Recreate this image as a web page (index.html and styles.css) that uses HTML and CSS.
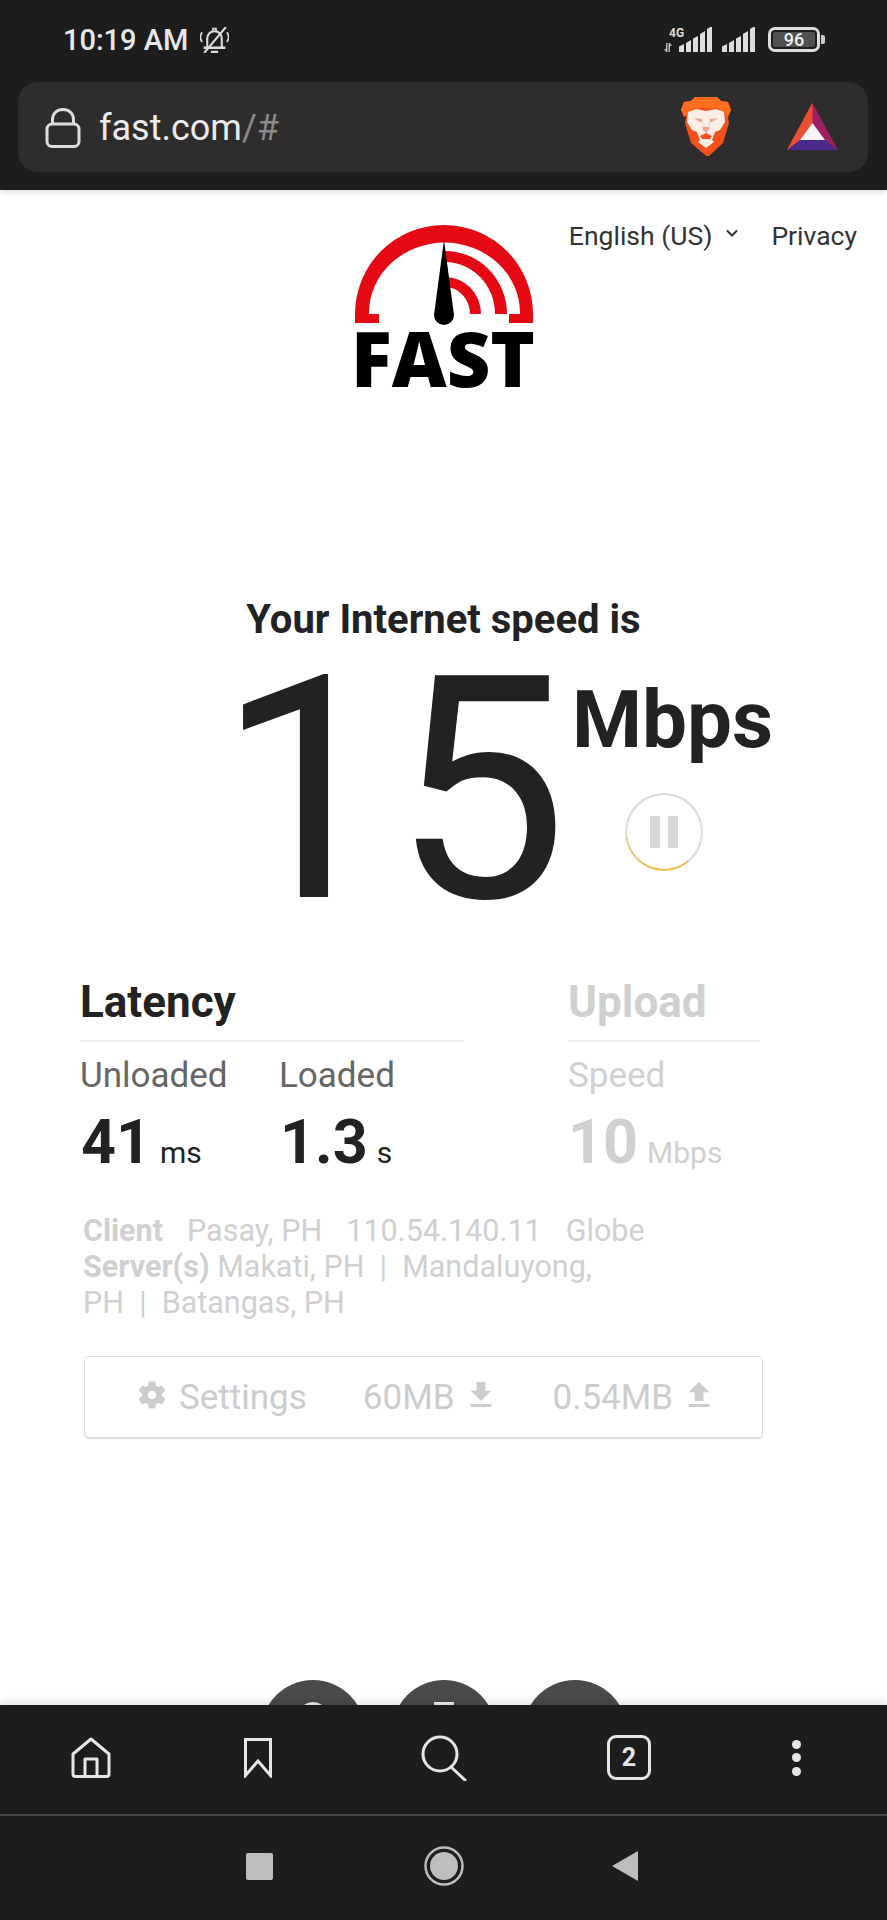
FILE: index.html
```html
<!DOCTYPE html>
<html lang="en">
<head>
    <meta charset="UTF-8">
    <meta name="viewport" content="width=device-width, initial-scale=1.0">
    <title>Internet Speed Test</title>
    <link rel="stylesheet" href="styles.css">
</head>
<body>
    <header class="browser-top">
        <div class="status-bar">
            <div class="status-left">
                <span class="clock">10:19 AM</span>
                <svg class="bell-off" viewBox="0 0 28 25" fill="none" stroke="#ddd" stroke-width="2">
                    <path d="M7 19.500V11c0-4 3-7 7-7s7 3 7 7v8.500"/>
                    <path d="M3.500 20h21M10.500 24h7" stroke-width="2.400"/>
                    <path d="M12.500 4V1.500h3V4" stroke-width="1.500"/>
                    <path d="M2 5c-2 3-2 6.500 0 9.500M26 5c2 3 2 6.500 0 9.500" stroke-width="1.600"/>
                    <path d="M25 0 4 25" stroke-width="2"/>
                </svg>
            </div>
            <div class="status-right">
                <svg class="signal-4g" viewBox="0 0 49 26" fill="#ddd">
                    <text x="5" y="10" class="net-label">4G</text>
                    <path d="M2 16h1.500v9H2l-2-3h2zM6 25H4.500v-9H6l2 3H6z" fill="#bbb"/>
                    <path d="M15 20.500l5-2.500v8h-5zM22 17l5-3v12h-5zM29 12.500l5-2.500v16h-5zM36 8l5-3v21h-5zM43 3l5-3v26h-5z" transform="translate(0 -1)"/>
                </svg>
                <svg class="signal" viewBox="0 0 34 26" fill="#ddd">
                    <path d="M0 20.500l5-2.500v8H0zM7 17l5-3v12H7zM14 12.500l5-2.500v16h-5zM21 8l5-3v21h-5zM28 3l5-3v26h-5z" transform="translate(0 -1)"/>
                </svg>
                <div class="battery">
                    <div class="battery-body"><span class="battery-level">96</span></div>
                    <div class="battery-nub"></div>
                </div>
            </div>
        </div>
        <div class="url-bar">
            <svg class="lock" viewBox="0 0 36 40" fill="none" stroke="#ddd" stroke-width="3">
                <rect x="2" y="16" width="32" height="22.500" rx="5"/>
                <path d="M7.500 16V11.500C7.500 5.500 12 1.500 18 1.500s10.500 4 10.500 10V16"/>
            </svg>
            <span class="url-text">fast.com<span class="url-faint">/#</span></span>
            <svg class="brave" viewBox="0 0 50 59">
                <path d="M14 0h22l4 4 7 1 3 8-3 7 1 6-6 20-14 13L25 59l-1-1-14-12L4 26l1-6-5-7 3-8 7-1z" fill="#f4511e"/>
                <path d="M14 0h22l4 4 7 1 3 8-3 7-10-9H13L3 20l-3-7 3-8 7-1z" fill="#ff6d1f"/>
                <path d="M7 15l8-3 10 2 10-2 8 3 1 10-5 8-5 2-3 8 2 2-8 6-8-6 2-2-3-8-5-2-5-8z" fill="#fbeee6"/>
                <path d="M13 21l8 1 1 8h6l1-8 8-1-6 4-2 0-1 8-3 3-3-3-1-8h-2z" fill="#e8a890"/>
                <path d="M25 36l6 3-2 3h-8l-2-3z" fill="#f4511e"/>
            </svg>
            <svg class="bat" viewBox="0 0 51 47">
                <path d="M25.500 0 51 47H0z" fill="#9e1f63"/>
                <path d="M25.500 0 0 47l13-10z" fill="#ef4f2b"/>
                <path d="M25.500 0v20L13 37 0 47z" fill="#e8502f"/>
                <path d="M0 47h51L38 37H13z" fill="#4b2a8c"/>
                <path d="M25.500 20 38 37H13z" fill="#fbf3f6"/>
            </svg>
        </div>
    </header>

    <main class="page">
        <div class="page-head">
            <div></div>
            <svg class="logo" viewBox="345 225 198 190">
                <path d="M355 323v-9a89 89 0 0 1 178 0v9h-24v-9h11v-1a75 70 0 0 0-151 0v1h10v9z" fill="#e50914"/>
                <path d="M445 251a62 63 0 0 1 62 63h-12a50 52 0 0 0-50-52z" fill="#e50914"/>
                <path d="M445 277a36 37 0 0 1 36 37h-11a25 27 0 0 0-25-27z" fill="#e50914"/>
                <path d="M444 240l10 75a10 10 0 1 1-20 0z" fill="#000"/>
                <text x="351" y="387" class="logo-word" textLength="184" lengthAdjust="spacingAndGlyphs">FAST</text>
            </svg>
            <nav class="top-links">
                <span class="lang">English (US)
                    <svg class="chevron" viewBox="0 0 12 8" fill="none" stroke="#333" stroke-width="2"><path d="M1 1.500l5 5 5-5"/></svg>
                </span>
                <span>Privacy</span>
            </nav>
        </div>

        <h1 class="speed-title">Your Internet speed is</h1>
        <div class="speed-row">
            <div class="speed-value">15</div>
            <div class="speed-side">
                <div class="speed-unit">Mbps</div>
                <div class="pause-btn">
                    <span class="pause-bar"></span>
                    <span class="pause-bar"></span>
                </div>
            </div>
        </div>

        <section class="metrics">
            <div class="metric-group latency">
                <h2 class="metric-title">Latency</h2>
                <div class="metric-cols">
                    <div class="metric-col">
                        <div class="metric-label">Unloaded</div>
                        <div class="metric-value">41<span class="metric-unit">ms</span></div>
                    </div>
                    <div class="metric-col">
                        <div class="metric-label">Loaded</div>
                        <div class="metric-value">1.3<span class="metric-unit">s</span></div>
                    </div>
                </div>
            </div>
            <div class="metric-group upload">
                <h2 class="metric-title">Upload</h2>
                <div class="metric-label">Speed</div>
                <div class="metric-value">10<span class="metric-unit">Mbps</span></div>
            </div>
        </section>

        <div class="details">
            <div class="client-line"><b>Client</b><span>Pasay, PH</span><span>110.54.140.11</span><span>Globe</span></div>
            <div><b>Server(s)</b> Makati, PH &nbsp;|&nbsp; Mandaluyong,<br>PH &nbsp;|&nbsp; Batangas, PH</div>
        </div>

        <div class="settings-box">
            <span class="settings-item">
                <svg class="gear" viewBox="2 2 20 20" fill="#ccc"><path d="M19.140 12.940c.04-.3.06-.61.06-.94 0-.32-.02-.64-.07-.94l2.030-1.580c.18-.14.23-.41.12-.61l-1.920-3.320c-.12-.22-.37-.29-.59-.22l-2.390.96c-.5-.38-1.030-.7-1.620-.94l-.36-2.540c-.04-.24-.24-.41-.48-.41h-3.840c-.24 0-.43.17-.47.41l-.36 2.540c-.59.24-1.130.57-1.620.94l-2.390-.96c-.22-.08-.47 0-.59.22L2.740 8.870c-.12.21-.08.47.12.61l2.030 1.580c-.05.3-.09.63-.09.94s.02.64.07.94l-2.030 1.580c-.18.14-.23.41-.12.61l1.920 3.320c.12.22.37.29.59.22l2.390-.96c.5.38 1.030.7 1.620.94l.36 2.540c.05.24.24.41.48.41h3.840c.24 0 .44-.17.47-.41l.36-2.540c.59-.24 1.130-.56 1.620-.94l2.390.96c.22.08.47 0 .59-.22l1.920-3.320c.12-.22.07-.47-.12-.61l-2.010-1.580zM12 15c-1.650 0-3-1.350-3-3s1.350-3 3-3 3 1.350 3 3-1.350 3-3 3z"/></svg>
                Settings
            </span>
            <span class="settings-item transfer-item">60MB
                <svg class="transfer" viewBox="5 3 14 17" fill="#ccc"><path d="M19 9h-4V3H9v6H5l7 7 7-7zM5 18v2h14v-2H5z"/></svg>
            </span>
            <span class="settings-item transfer-item">0.54MB
                <svg class="transfer" viewBox="5 3 14 17" fill="#ccc"><path d="M9 16h6v-6h4l-7-7-7 7h4zm-4 2h14v2H5z"/></svg>
            </span>
        </div>

        <div class="share-row">
            <div class="share-btn"><span class="share-mark round"></span></div>
            <div class="share-btn"><span class="share-mark"></span></div>
            <div class="share-btn"></div>
        </div>
    </main>

    <footer class="browser-bottom">
        <div class="toolbar">
            <svg class="tool home" viewBox="0 0 40 41" fill="none" stroke="#e6e6e6" stroke-width="3" stroke-linejoin="round">
                <path d="M20 2 38 17v20a2.500 2.500 0 0 1-2.500 2.500h-31A2.500 2.500 0 0 1 2 37V17z"/>
                <path d="M14 39V22h12v17"/>
            </svg>
            <svg class="tool bookmark" viewBox="0 0 28 40" fill="none" stroke="#e6e6e6" stroke-width="3">
                <path d="M1.500 1.500h25v36L14 23 1.500 37.500z"/>
            </svg>
            <svg class="tool search" viewBox="0 0 46 46" fill="none" stroke="#e6e6e6" stroke-width="3">
                <circle cx="19" cy="19" r="17"/>
                <path d="M30 32l14 13" stroke-linecap="round"/>
            </svg>
            <div class="tool tab-count">2</div>
            <div class="tool more-dots"><span></span><span></span><span></span></div>
        </div>
        <div class="nav-bar">
            <div class="nav-square"></div>
            <svg class="nav-circle" viewBox="0 0 40 40">
                <circle cx="20" cy="20" r="18.500" fill="none" stroke="#bdbdbd" stroke-width="2.500"/>
                <circle cx="20" cy="20" r="14" fill="#bdbdbd"/>
            </svg>
            <svg class="nav-back" viewBox="0 0 26 30"><path d="M26 0v30L0 15z" fill="#bdbdbd"/></svg>
        </div>
    </footer>
</body>
</html>
```

FILE: styles.css
```css
* {
    box-sizing: border-box;
}
html, body {
    margin: 0;
    padding: 0;
}
body {
    width: 887px;
    height: 1920px;
    overflow: hidden;
    display: flex;
    flex-direction: column;
    font-family: Roboto, Arial, sans-serif;
    background-color: #fff;
    color: #222;
}

/* browser chrome, top */
.browser-top {
    height: 190px;
    flex: none;
    background-color: #1d1d1d;
    position: relative;
    z-index: 2;
    box-shadow: 0 2px 6px rgba(0, 0, 0, 0.15);
}
.status-bar {
    height: 82px;
    display: flex;
    justify-content: space-between;
    padding: 27px 62px 0 63px;
}
.status-left {
    display: flex;
    align-items: flex-start;
    gap: 12px;
}
.clock {
    font-size: 29px;
    font-weight: 500;
    line-height: 26px;
    color: #e8e8e8;
}
.bell-off {
    width: 29px;
    height: 26px;
}
.status-right {
    display: flex;
    align-items: flex-start;
    gap: 9px;
}
.signal-4g {
    width: 49px;
    height: 26px;
}
.net-label {
    font-size: 12px;
    font-weight: 700;
    fill: #ddd;
}
.signal {
    width: 34px;
    height: 26px;
}
.battery {
    display: flex;
    align-items: center;
    gap: 1px;
    margin-left: 3px;
}
.battery-body {
    width: 52px;
    height: 25px;
    border: 3px solid #ddd;
    border-radius: 7px;
    padding: 2px;
    display: flex;
}
.battery-level {
    flex: 1;
    background-color: #505050;
    border-radius: 2px;
    color: #eee;
    font-size: 18px;
    font-weight: 500;
    line-height: 15px;
    text-align: center;
}
.battery-nub {
    width: 4px;
    height: 9px;
    background-color: #ccc;
    border-radius: 0 2px 2px 0;
}
.url-bar {
    height: 90px;
    margin: 0 19px 0 18px;
    padding: 0 30px 0 27px;
    display: flex;
    align-items: center;
    background-color: #2e2c2c;
    border-radius: 20px;
}
.lock {
    width: 36px;
    height: 40px;
    margin-top: 2px;
}
.url-text {
    margin: 2px 0 0 18px;
    font-size: 36px;
    color: #ececec;
    flex: 1;
}
.url-faint {
    color: #8a8a8a;
}
.brave {
    width: 50px;
    height: 59px;
    margin-top: -2px;
}
.bat {
    width: 51px;
    height: 47px;
    margin-left: 56px;
    margin-top: -2px;
}

/* page */
.page {
    flex: 1;
    min-height: 0;
    overflow: hidden;
    background-color: #fff;
}
.page-head {
    display: grid;
    grid-template-columns: 1fr 198px 1fr;
    padding-top: 35px;
    margin-bottom: 186px;
}
.logo {
    width: 198px;
    height: 190px;
    display: block;
}
.logo-word {
    font-family: "Open Sans", sans-serif;
    font-size: 76px;
    font-weight: 800;
    fill: #000;
}
.top-links {
    display: flex;
    justify-content: flex-end;
    align-items: flex-start;
    gap: 33px;
    padding-right: 30px;
    font-size: 26.500px;
    line-height: 26px;
    color: #333;
    margin-top: -2px;
}
.lang {
    display: flex;
    align-items: flex-start;
    gap: 14px;
}
.chevron {
    width: 12px;
    height: 8px;
    margin-top: 6px;
}
.speed-title {
    margin: 0;
    font-size: 40px;
    line-height: 38px;
    font-weight: 700;
    text-align: center;
    color: #222;
}
.speed-row {
    display: flex;
    align-items: flex-start;
    margin-top: 2px;
    padding-left: 217px;
}
.speed-value {
    font-size: 312px;
    line-height: 300px;
    color: #222;
    width: 355px;
}
.speed-side {
    padding-top: 39px;
}
.speed-unit {
    font-size: 80px;
    line-height: 80px;
    font-weight: 700;
    color: #222;
}
.pause-btn {
    width: 78px;
    height: 78px;
    margin: 33px 0 0 53px;
    border-radius: 50%;
    background:
        radial-gradient(closest-side, #fff 36.500px, transparent 37px),
        conic-gradient(from 140deg, #ecc06a, #f0b840 50deg, #e6d6ae 120deg, #ddd 135deg, #ddd 360deg);
    display: flex;
    align-items: center;
    justify-content: center;
    gap: 8px;
}
.pause-bar {
    width: 10px;
    height: 32px;
    background-color: #d6d6d6;
}
.metrics {
    display: flex;
    gap: 104px;
    padding-left: 80px;
    margin-top: 41px;
}
.latency {
    width: 384px;
}
.upload {
    width: 192px;
    color: #d0d0d0;
}
.metric-title {
    margin: 0 0 17px 0;
    height: 60px;
    font-size: 44px;
    line-height: 40px;
    font-weight: 700;
    border-bottom: 2px solid #eee;
}
.metric-cols {
    display: flex;
    gap: 49px;
}
.metric-col {
    width: 150px;
}
.metric-label {
    font-size: 35px;
    line-height: 34px;
    color: #666;
}
.upload .metric-label {
    color: #d0d0d0;
}
.metric-value {
    margin-top: 19px;
    font-size: 61px;
    line-height: 60px;
    font-weight: 700;
    padding-left: 1px;
}
.metric-unit {
    margin-left: 9px;
    font-size: 30px;
    line-height: 30px;
    font-weight: 400;
}
.upload .metric-value {
    padding-left: 0;
}
.details {
    margin: 41px 0 0 83px;
    font-size: 30.500px;
    line-height: 36px;
    color: #d0d0d0;
}
.client-line {
    display: flex;
    gap: 24px;
}
.settings-box {
    width: 679px;
    height: 83px;
    margin: 35px 0 0 84px;
    padding-left: 53px;
    border: 1px solid #ddd;
    border-bottom: 2px solid #ddd;
    border-radius: 5px;
    display: flex;
    align-items: center;
    font-size: 35px;
    color: #ccc;
}
.settings-item {
    display: flex;
    align-items: center;
    gap: 13px;
}
.transfer-item {
    gap: 15px;
    margin-left: 56px;
}
.transfer-item + .transfer-item {
    margin-left: 61px;
}
.gear {
    width: 28px;
    height: 28px;
    margin-top: -4px;
}
.transfer {
    width: 22px;
    height: 25px;
    margin-top: -5px;
}
.share-row {
    display: flex;
    justify-content: center;
    gap: 27px;
    margin-top: 241px;
}
.share-btn {
    width: 104px;
    height: 104px;
    border-radius: 50%;
    background-color: #4a4a4a;
    display: flex;
    justify-content: center;
}
.share-mark {
    width: 20px;
    height: 20px;
    margin-top: 22px;
    background-color: #eee;
}
.share-mark.round {
    width: 30px;
    height: 30px;
    border-radius: 50%;
}

/* browser chrome, bottom */
.browser-bottom {
    height: 215px;
    flex: none;
    background-color: #1d1d1d;
    position: relative;
    box-shadow: 0 -3px 8px rgba(0, 0, 0, 0.12);
}
.toolbar {
    height: 109px;
    border-bottom: 2px solid #444;
    display: grid;
    grid-template-columns: 166px 168px 204px 166px 168px;
    padding-left: 8px;
    align-items: center;
    justify-items: center;
    box-sizing: content-box;
}
.home {
    width: 40px;
    height: 41px;
    margin-top: -4px;
}
.bookmark {
    width: 28px;
    height: 40px;
    margin-top: -4px;
}
.search {
    width: 46px;
    height: 46px;
    margin-top: -4px;
}
.tab-count {
    width: 44px;
    height: 45px;
    margin-top: -4px;
    border: 3px solid #e6e6e6;
    border-radius: 9px;
    color: #e6e6e6;
    font-size: 25px;
    font-weight: 700;
    line-height: 39px;
    text-align: center;
}
.more-dots {
    display: flex;
    flex-direction: column;
    gap: 4.500px;
    margin-top: -4px;
}
.more-dots span {
    width: 9px;
    height: 9px;
    border-radius: 50%;
    background-color: #e6e6e6;
}
.nav-bar {
    height: 104px;
    display: flex;
    align-items: center;
    padding-left: 246px;
    margin-top: -2px;
}
.nav-square {
    width: 27px;
    height: 27px;
    background-color: #bdbdbd;
    border-radius: 2px;
}
.nav-circle {
    width: 40px;
    height: 40px;
    margin-left: 151px;
}
.nav-back {
    width: 26px;
    height: 30px;
    margin-left: 148px;
}
```
